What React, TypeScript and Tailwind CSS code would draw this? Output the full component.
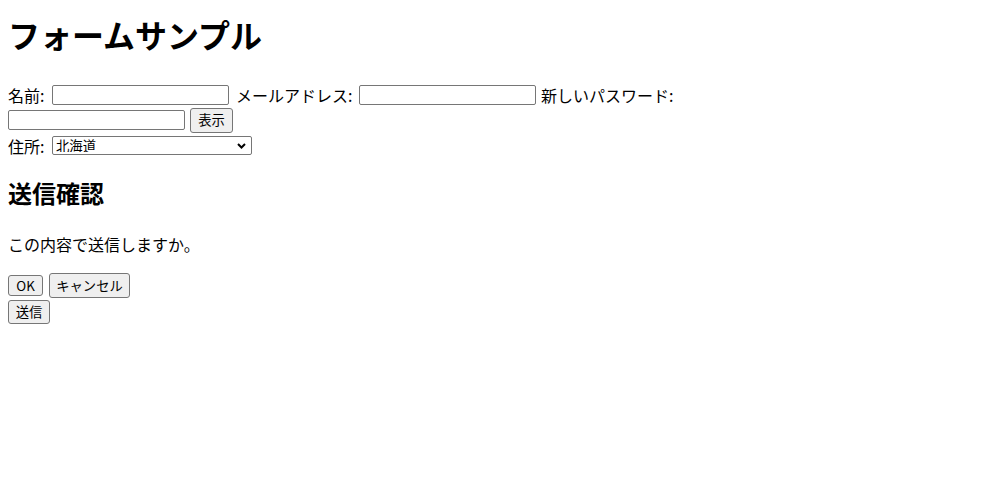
import React from "react";

const font = { fontFamily: '"Noto Sans CJK JP", "Noto Sans", sans-serif' };

export default function App() {
  return (
    <div className="bg-white w-[1000px] h-[500px] text-black px-[8px]" style={font}>
      <h1 className="pt-[15px] h-[54px] text-[32px] leading-[38px] font-bold">フォームサンプル</h1>
      <form className="mt-[28px]">
        <div className="flex items-center h-[25px] text-[16px]">
          <label className="w-[44px]">名前:</label>
          <input type="text" className="block w-[177px] h-[20px] border border-[#767676] rounded-[2px] bg-white" />
          <label className="ml-[7px] w-[123px]">メールアドレス:</label>
          <input type="email" className="block w-[177px] h-[20px] border border-[#767676] rounded-[2px] bg-white" />
          <label className="ml-[5px]">新しいパスワード:</label>
        </div>
        <div className="flex items-center h-[26px]">
          <input type="password" className="block w-[177px] h-[20px] border border-[#767676] rounded-[2px] bg-white" />
          <button type="button" className="block ml-[5px] w-[43px] h-[25px] border border-[#767676] rounded-[3px] bg-[#efefef] text-[13.33px] leading-none">表示</button>
        </div>
        <div className="flex items-center h-[25px] text-[16px]">
          <label className="w-[44px]">住所:</label>
          <div className="relative w-[200px] h-[19px]">
            <select className="block appearance-none w-[200px] h-[19px] border border-[#767676] rounded-[2px] bg-white text-[13.33px] leading-none pl-[3px] py-0" style={font}>
              <option>北海道</option>
              <option>東京都</option>
              <option>大阪府</option>
            </select>
            <svg className="absolute right-[6px] top-[7px] pointer-events-none" width="9" height="6" viewBox="0 0 9 6">
              <path d="M1 1 L4.5 4.5 L8 1" fill="none" stroke="#000" strokeWidth="2" />
            </svg>
          </div>
        </div>
      </form>
      <h2 className="mt-[20px] h-[30px] text-[24px] leading-[30px] font-bold">送信確認</h2>
      <p className="mt-[24px] h-[24px] text-[16px] leading-[24px]">この内容で送信しますか。</p>
      <div className="mt-[17px] flex items-center h-[25px] gap-[6px]">
        <button type="button" className="block w-[35px] h-[21px] border border-[#767676] rounded-[3px] bg-[#efefef] text-[13.33px] leading-none">OK</button>
        <button type="button" className="block w-[81px] h-[25px] border border-[#767676] rounded-[3px] bg-[#efefef] text-[13.33px] leading-none">キャンセル</button>
      </div>
      <div className="mt-[2px] flex">
        <button type="button" className="block w-[42px] h-[24px] border border-[#767676] rounded-[3px] bg-[#efefef] text-[13.33px] leading-none">送信</button>
      </div>
    </div>
  );
}
